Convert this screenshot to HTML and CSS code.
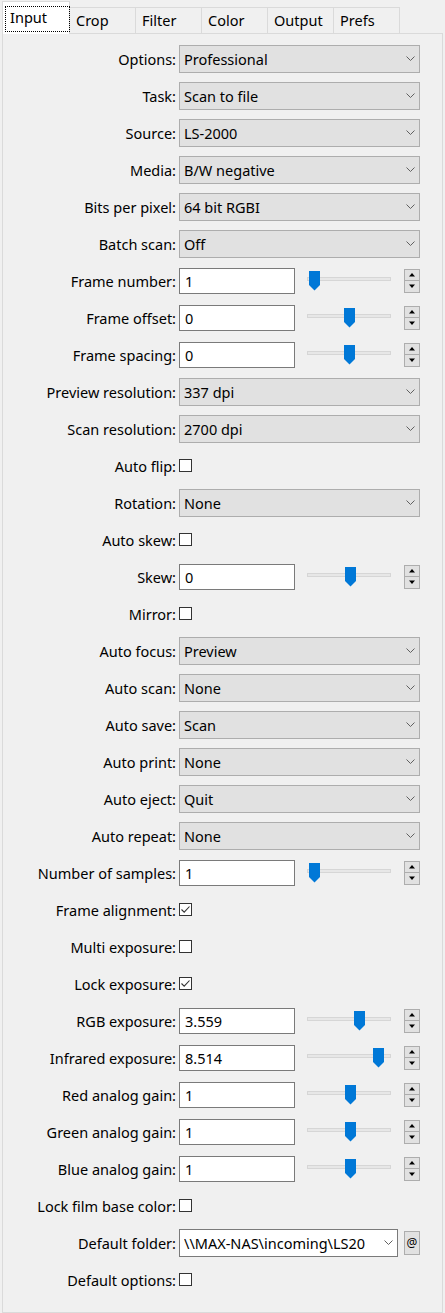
FILE: index.html
```html
<!DOCTYPE html>
<html>
<head>
<meta charset="utf-8">
<title>Scanner settings</title>
<link rel="stylesheet" href="styles.css">
</head>
<body>
<div class="tabs">
  <div class="tab selected"><span class="focus">Input</span></div>
  <div class="tab">Crop</div>
  <div class="tab">Filter</div>
  <div class="tab">Color</div>
  <div class="tab">Output</div>
  <div class="tab">Prefs</div>
</div>
<div class="panel">
  <div class="form" id="form"></div>
</div>
<script src="app.js"></script>
</body>
</html>
```

FILE: styles.css
```css
html, body {
  margin: 0;
  padding: 0;
  background: #f0f0f0;
}
body {
  width: 445px;
  height: 1313px;
  overflow: hidden;
  font-family: "Noto Sans", "Open Sans", sans-serif;
  font-size: 14.5px;
  color: #000;
}
.tabs {
  display: flex;
  align-items: flex-end;
  height: 33px;
  padding-left: 2px;
  position: relative;
  z-index: 2;
}
.tab {
  box-sizing: border-box;
  width: 66px;
  height: 26px;
  border: 1px solid #dadada;
  border-bottom: none;
  border-left: none;
  background: #f0f0f0;
  padding: 2px 0 0 6px;
  line-height: 20px;
}
.tab.selected {
  width: 68px;
  height: 33px;
  margin-bottom: -1px;
  border-left: 1px solid #dadada;
  background: #ffffff;
  padding: 4px 0 0 2px;
}
.focus {
  display: block;
  box-sizing: border-box;
  width: 65px;
  height: 26px;
  border: 1px dotted #000;
  padding: 0 0 0 4px;
  line-height: 20px;
}
.panel {
  box-sizing: border-box;
  margin-left: 2px;
  width: 441px;
  height: 1280px;
  border: 1px solid #dadada;
  background: #f0f0f0;
  padding-top: 6px;
}
.form {
  display: grid;
  grid-template-columns: 173px 241px;
  grid-auto-rows: 37px;
  column-gap: 3px;
  align-items: center;
}
.label {
  text-align: right;
  white-space: nowrap;
}
.combo {
  box-sizing: border-box;
  height: 28px;
  background: #e1e1e1;
  border: 1px solid #adadad;
  display: flex;
  align-items: center;
  padding-left: 4px;
}
.combo .value {
  flex: 1;
  white-space: nowrap;
  overflow: hidden;
}
.combo .chev {
  width: 9px;
  height: 5px;
  margin-right: 4px;
  flex: none;
}
.combo.edit {
  background: #ffffff;
  border-color: #7a7a7a;
}
.folder {
  display: flex;
  align-items: center;
}
.folder .combo {
  width: 219px;
}
.atbtn {
  box-sizing: border-box;
  width: 16px;
  height: 24px;
  margin-left: 6px;
  border: 1px solid #adadad;
  background: #e1e1e1;
  font-size: 12px;
  display: flex;
  align-items: center;
  justify-content: center;
}
.checkbox {
  box-sizing: border-box;
  width: 13px;
  height: 13px;
  border: 1px solid #333;
  background: #fff;
  display: flex;
}
.checkbox svg {
  width: 11px;
  height: 11px;
}
.spin-row {
  display: flex;
  align-items: center;
}
.text {
  box-sizing: border-box;
  width: 116px;
  height: 26px;
  border: 1px solid #7a7a7a;
  background: #fff;
  padding-left: 5px;
  line-height: 24px;
}
.slider {
  position: relative;
  box-sizing: border-box;
  width: 84px;
  height: 4px;
  margin-left: 12px;
  margin-top: -3px;
  background: #e7e7e7;
  border: 1px solid #d6d6d6;
}
.thumb {
  position: absolute;
  top: -7px;
  width: 11px;
  height: 20px;
}
.spinner {
  box-sizing: border-box;
  width: 16px;
  height: 24px;
  margin-left: 13px;
  display: flex;
  flex-direction: column;
}
.spinner .btn {
  box-sizing: border-box;
  height: 12px;
  border: 1px solid #adadad;
  background: #e1e1e1;
  display: flex;
  align-items: center;
  justify-content: center;
}
.spinner .btn + .btn {
  border-top: none;
}
.spinner svg {
  width: 6px;
  height: 4px;
}
```

FILE: app.js
```js
const rows = [
  ["Options", "combo", "Professional"],
  ["Task", "combo", "Scan to file"],
  ["Source", "combo", "LS-2000"],
  ["Media", "combo", "B/W negative"],
  ["Bits per pixel", "combo", "64 bit RGBI"],
  ["Batch scan", "combo", "Off"],
  ["Frame number", "spin", "1", 1],
  ["Frame offset", "spin", "0", 36],
  ["Frame spacing", "spin", "0", 36],
  ["Preview resolution", "combo", "337 dpi"],
  ["Scan resolution", "combo", "2700 dpi"],
  ["Auto flip", "check", false],
  ["Rotation", "combo", "None"],
  ["Auto skew", "check", false],
  ["Skew", "spin", "0", 37],
  ["Mirror", "check", false],
  ["Auto focus", "combo", "Preview"],
  ["Auto scan", "combo", "None"],
  ["Auto save", "combo", "Scan"],
  ["Auto print", "combo", "None"],
  ["Auto eject", "combo", "Quit"],
  ["Auto repeat", "combo", "None"],
  ["Number of samples", "spin", "1", 1],
  ["Frame alignment", "check", true],
  ["Multi exposure", "check", false],
  ["Lock exposure", "check", true],
  ["RGB exposure", "spin", "3.559", 46],
  ["Infrared exposure", "spin", "8.514", 65],
  ["Red analog gain", "spin", "1", 37],
  ["Green analog gain", "spin", "1", 37],
  ["Blue analog gain", "spin", "1", 37],
  ["Lock film base color", "check", false],
  ["Default folder", "folder", "\\\\MAX-NAS\\incoming\\LS20"],
  ["Default options", "check", false]
];

const chev = '<svg class="chev" viewBox="0 0 9 5"><path d="M0.5 0.5 L4.5 4.5 L8.5 0.5" fill="none" stroke="#606060" stroke-width="1"/></svg>';
const thumb = '<svg class="thumb" viewBox="0 0 11 20" style="left:LEFTpx"><path d="M0 0 H11 V14 L5.5 19.5 L0 14 Z" fill="#0078d7"/></svg>';
const up = '<svg viewBox="0 0 6 4"><path d="M3 0 L6 3.5 L0 3.5 Z" fill="#000"/></svg>';
const down = '<svg viewBox="0 0 6 4"><path d="M0 0.5 L6 0.5 L3 4 Z" fill="#000"/></svg>';
const tick = '<svg viewBox="0 0 11 11"><path d="M1.5 5.5 L4.2 8.2 L9.5 2.5" fill="none" stroke="#333" stroke-width="1.1"/></svg>';

const form = document.getElementById("form");
let html = "";
for (const r of rows) {
  const [label, type, val, pos] = r;
  html += '<div class="label">' + label + ':</div>';
  if (type === "combo") {
    html += '<div class="combo"><span class="value">' + val + '</span>' + chev + '</div>';
  } else if (type === "check") {
    html += '<div><div class="checkbox">' + (val ? tick : "") + '</div></div>';
  } else if (type === "spin") {
    html += '<div class="spin-row"><div class="text">' + val + '</div><div class="slider">' +
      thumb.replace("LEFT", pos) + '</div><div class="spinner"><div class="btn">' + up +
      '</div><div class="btn">' + down + '</div></div></div>';
  } else if (type === "folder") {
    html += '<div class="folder"><div class="combo edit"><span class="value">' + val + '</span>' + chev +
      '</div><div class="atbtn">@</div></div>';
  }
}
form.innerHTML = html;
```
